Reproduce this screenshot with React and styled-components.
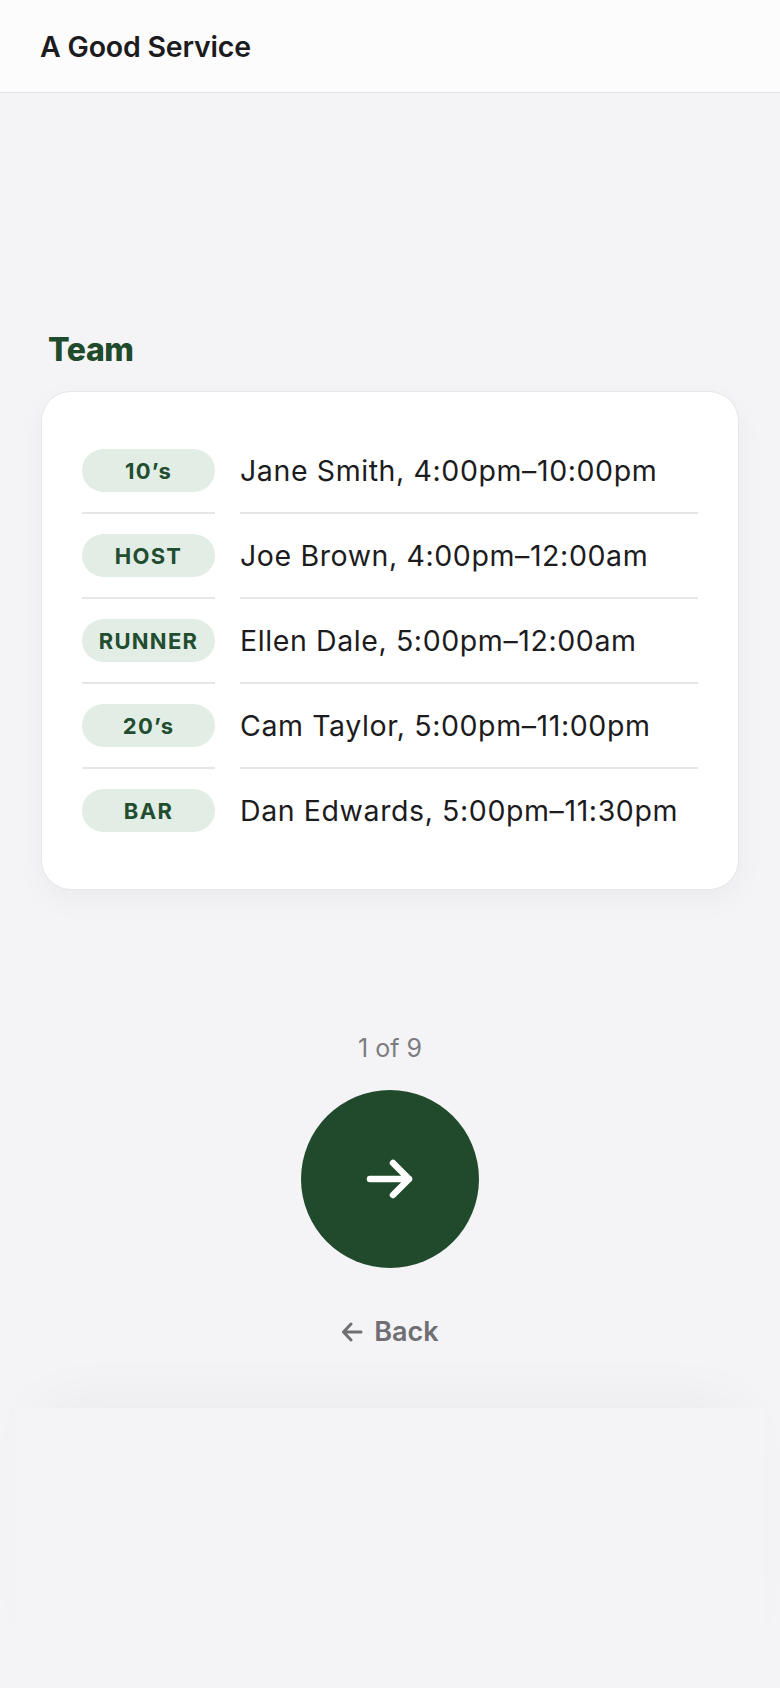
import React from "react";
import styled, { createGlobalStyle } from "styled-components";

const GlobalStyle = createGlobalStyle`
  html, body {
    margin: 0;
    padding: 0;
    background: #f4f4f6;
    font-family: Inter, "Noto Sans", "Liberation Sans", sans-serif;
    -webkit-font-smoothing: antialiased;
  }
  * { box-sizing: border-box; }
`;

const Page = styled.div`
  min-height: 1688px;
  display: flex;
  flex-direction: column;
  background: #f4f4f6;
`;

const Header = styled.header`
  height: 93px;
  display: flex;
  align-items: center;
  padding: 0 40px;
  background: #fcfcfc;
  border-bottom: 1px solid #e3e3e7;
`;

const Brand = styled.h1`
  margin: 0;
  font-size: 28.5px;
  font-weight: 600;
  color: #1c1c1e;
  letter-spacing: -0.2px;
`;

const Main = styled.main`
  display: flex;
  flex-direction: column;
  padding: 238px 41px 0;
`;

const SectionTitle = styled.h2`
  margin: 0 0 22px 7px;
  font-size: 32px;
  line-height: 38px;
  font-weight: 800;
  color: #1f4a2c;
  letter-spacing: -0.4px;
`;

const Card = styled.section`
  background: #ffffff;
  border: 1px solid #e6e6e9;
  border-radius: 30px;
  padding: 37px 40px 35px;
  box-shadow: 0 10px 30px rgba(0, 0, 0, 0.04);
  display: grid;
  grid-template-columns: 133px 1fr;
  column-gap: 25px;
`;

const Cell = styled.div`
  display: flex;
  align-items: center;
  padding: 20px 0;
  border-bottom: ${(p) => (p.$last ? "2px solid transparent" : "2px solid #e6e6e8")};
`;

const Pill = styled.span`
  display: flex;
  align-items: center;
  justify-content: center;
  width: 100%;
  height: 43px;
  border-radius: 22px;
  background: #e2ede6;
  color: #234d30;
  font-size: 22px;
  font-weight: 700;
  letter-spacing: 1.3px;
`;

const Shift = styled.span`
  font-size: 28.5px;
  color: #1c1c1e;
  letter-spacing: 0.6px;
  white-space: nowrap;
`;

const Pager = styled.div`
  display: flex;
  flex-direction: column;
  align-items: center;
  padding-top: 143px;
`;

const Count = styled.div`
  font-size: 25px;
  line-height: 30px;
  color: #7c7c81;
`;

const NextButton = styled.button`
  margin-top: 27px;
  width: 178px;
  height: 178px;
  border-radius: 50%;
  border: none;
  background: #214a2d;
  display: flex;
  align-items: center;
  justify-content: center;
  cursor: pointer;
  padding: 0;
`;

const BackLink = styled.button`
  margin-top: 48px;
  display: flex;
  align-items: center;
  gap: 11px;
  background: none;
  border: none;
  padding: 0;
  font-family: inherit;
  font-size: 27px;
  line-height: 32px;
  font-weight: 600;
  color: #6e6e73;
  cursor: pointer;
`;

const Footer = styled.div`
  margin: 60px 15px 0;
  flex: 1;
  background: #f4f4f6;
  box-shadow: 0 -30px 60px -30px rgba(0, 0, 0, 0.05);
`;

const rows = [
  { role: "10’s", shift: "Jane Smith, 4:00pm–10:00pm" },
  { role: "HOST", shift: "Joe Brown, 4:00pm–12:00am" },
  { role: "RUNNER", shift: "Ellen Dale, 5:00pm–12:00am" },
  { role: "20’s", shift: "Cam Taylor, 5:00pm–11:00pm" },
  { role: "BAR", shift: "Dan Edwards, 5:00pm–11:30pm" },
];

function ArrowRight() {
  return (
    <svg width="48" height="40" viewBox="0 0 48 40" fill="none">
      <path
        d="M4 20H43M27 4L43 20L27 36"
        stroke="#ffffff"
        strokeWidth="6.5"
        strokeLinecap="round"
        strokeLinejoin="round"
      />
    </svg>
  );
}

function ArrowLeft() {
  return (
    <svg width="22" height="20" viewBox="0 0 22 20" fill="none">
      <path
        d="M20 10H3M10 2L2.5 10L10 18"
        stroke="#6e6e73"
        strokeWidth="3"
        strokeLinecap="round"
        strokeLinejoin="round"
      />
    </svg>
  );
}

export default function App() {
  return (
    <>
      <GlobalStyle />
      <Page>
        <Header>
          <Brand>A Good Service</Brand>
        </Header>
        <Main>
          <SectionTitle>Team</SectionTitle>
          <Card>
            {rows.map((r, i) => {
              const last = i === rows.length - 1;
              return (
                <React.Fragment key={r.role}>
                  <Cell $last={last}>
                    <Pill>{r.role}</Pill>
                  </Cell>
                  <Cell $last={last}>
                    <Shift>{r.shift}</Shift>
                  </Cell>
                </React.Fragment>
              );
            })}
          </Card>
          <Pager>
            <Count>1 of 9</Count>
            <NextButton aria-label="Next">
              <ArrowRight />
            </NextButton>
            <BackLink>
              <ArrowLeft />
              Back
            </BackLink>
          </Pager>
        </Main>
        <Footer />
      </Page>
    </>
  );
}
